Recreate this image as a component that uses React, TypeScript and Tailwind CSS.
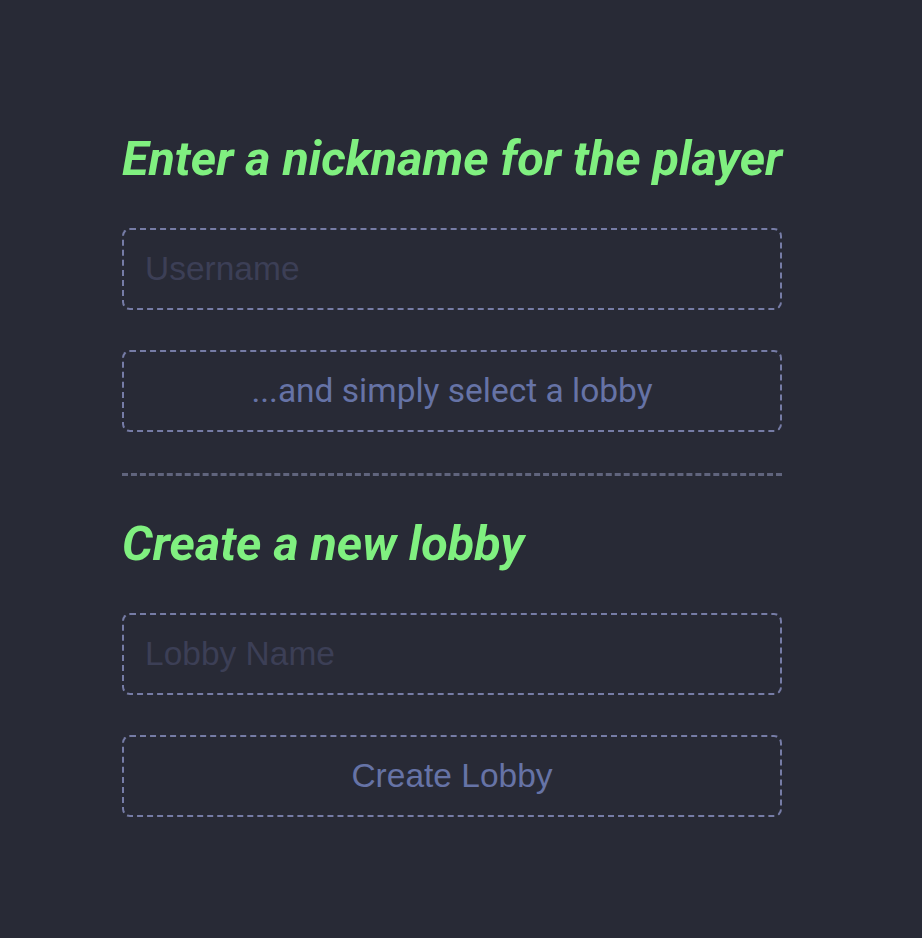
import React from "react";

const fieldBase =
  "h-[82px] w-full rounded-[8px] border-2 border-dashed border-[#767ca6] bg-transparent text-[33.5px] outline-none";

export default function App() {
  return (
    <div className="min-h-[938px] w-full bg-[#282a36] pt-[131px]">
      <div className="ml-[122px] flex w-[660px] flex-col">
        <h1 className="whitespace-nowrap font-['Roboto',sans-serif] text-[48.5px] font-bold italic leading-[56px] text-[#80f080]">
          Enter a nickname for the player
        </h1>
        <input
          placeholder="Username"
          className={`${fieldBase} mt-[41px] px-[21px] font-['Liberation_Sans',Arial,sans-serif] text-[#6272a4] placeholder:text-[#3c3f56]`}
        />
        <button
          className={`${fieldBase} mt-[40px] flex items-center justify-center font-['Roboto',sans-serif] text-[#6673a6]`}
        >
          ...and simply select a lobby
        </button>
        <div className="mt-[41px] h-0 w-full border-t-[3px] border-dashed border-[#60647d]" />
        <h2 className="mt-[40px] whitespace-nowrap font-['Roboto',sans-serif] text-[48.5px] font-bold italic leading-[56px] text-[#80f080]">
          Create a new lobby
        </h2>
        <input
          placeholder="Lobby Name"
          className={`${fieldBase} mt-[41px] px-[21px] font-['Liberation_Sans',Arial,sans-serif] text-[#6272a4] placeholder:text-[#3c3f56]`}
        />
        <button
          className={`${fieldBase} mt-[40px] flex items-center justify-center font-['Liberation_Sans',Arial,sans-serif] text-[#6673a6]`}
        >
          Create Lobby
        </button>
      </div>
    </div>
  );
}
